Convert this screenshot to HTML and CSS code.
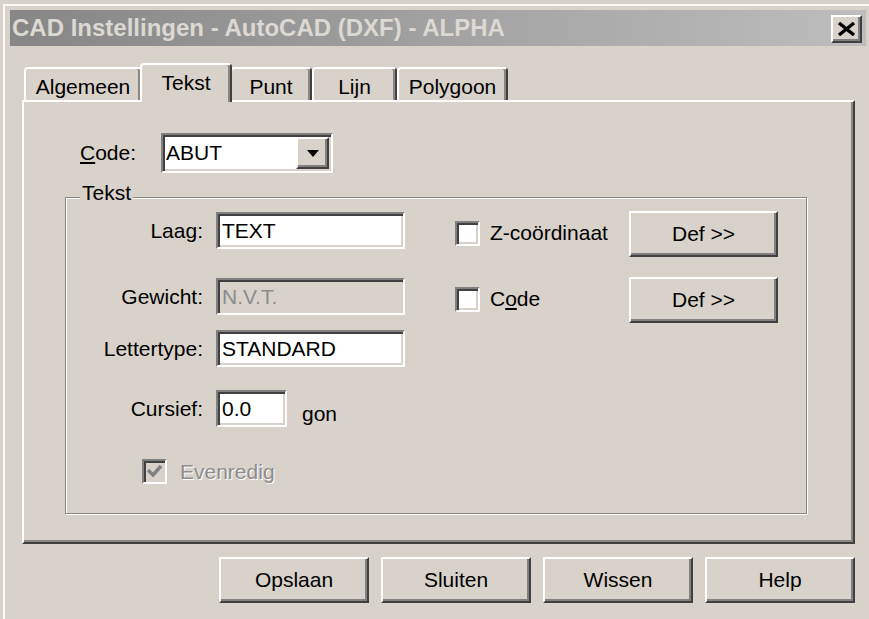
FILE: index.html
```html
<!DOCTYPE html>
<html lang="nl">
<head>
<meta charset="utf-8">
<title>CAD Instellingen - AutoCAD (DXF) - ALPHA</title>
<link rel="stylesheet" href="styles.css">
</head>
<body>
<div class="window">
  <div class="titlebar">
    <span class="title">CAD Instellingen - AutoCAD (DXF) - ALPHA</span>
    <button class="close" type="button" aria-label="Sluiten">
      <svg width="19" height="14" viewBox="0 0 19 14"><path d="M2 1 L17 13 M17 1 L2 13" stroke="#000" stroke-width="3.4" fill="none"/></svg>
    </button>
  </div>

  <div class="client">
    <div class="tabs">
      <div class="tab tab-algemeen">Algemeen</div>
      <div class="tab tab-tekst active">Tekst</div>
      <div class="tab tab-punt">Punt</div>
      <div class="tab tab-lijn">Lijn</div>
      <div class="tab tab-polygoon">Polygoon</div>
    </div>

    <div class="panel">
      <div class="code-row">
        <span class="code-label"><u>C</u>ode:</span>
        <div class="combo">
          <span class="combo-value">ABUT</span>
          <span class="combo-btn">
            <svg width="12" height="7" viewBox="0 0 12 7"><path d="M0 0 H12 L6 7 Z" fill="#000"/></svg>
          </span>
        </div>
      </div>

      <fieldset class="group">
        <legend>Tekst</legend>
        <div class="group-body">
          <div class="fields">
            <div class="row row-laag">
              <span class="lbl">Laag:</span>
              <div class="edit">TEXT</div>
            </div>
            <div class="row row-gewicht">
              <span class="lbl">Gewicht:</span>
              <div class="edit disabled">N.V.T.</div>
            </div>
            <div class="row row-font">
              <span class="lbl">Lettertype:</span>
              <div class="edit">STANDARD</div>
            </div>
            <div class="row row-cursief">
              <span class="lbl">Cursief:</span>
              <div class="edit edit-short">0.0</div>
              <span class="unit">gon</span>
            </div>
            <div class="row row-even">
              <span class="check checked disabled">
                <svg width="17" height="15" viewBox="0 0 17 15"><path d="M2 6 L7 11 L15 2" stroke="#808080" stroke-width="3.4" fill="none"/></svg>
              </span>
              <span class="check-text disabled-text">Evenredig</span>
            </div>
          </div>

          <div class="options">
            <div class="opt">
              <span class="check"></span>
              <span class="check-text">Z-coördinaat</span>
            </div>
            <button class="btn" type="button">Def &gt;&gt;</button>
            <div class="opt">
              <span class="check"></span>
              <span class="check-text">C<u>o</u>de</span>
            </div>
            <button class="btn" type="button">Def &gt;&gt;</button>
          </div>
        </div>
      </fieldset>
    </div>

    <div class="actions">
      <button class="btn" type="button">Opslaan</button>
      <button class="btn" type="button">Sluiten</button>
      <button class="btn" type="button">Wissen</button>
      <button class="btn" type="button">Help</button>
    </div>
  </div>
</div>
</body>
</html>
```
FILE: styles.css
```css
* { box-sizing: border-box; }

html, body {
  margin: 0;
  height: 100%;
}

body {
  background: #d8d2ca;
  font-family: "Liberation Sans", Arial, sans-serif;
  font-size: 21px;
  color: #000;
  overflow: hidden;
}

/* dialog frame */
.window {
  height: calc(100% - 4px);
  margin: 4px 0 0 3px;
  padding: 4px 0 0 5px;
  background: #d8d2ca;
  border-top: 2px solid #fbfaf8;
  border-left: 2px solid #fbfaf8;
}

.titlebar {
  height: 36px;
  margin-right: 3px;
  padding: 0 4px 0 2px;
  display: flex;
  align-items: center;
  justify-content: space-between;
  background: linear-gradient(to right, #868686, #bdbdbd);
}

.title {
  font-weight: bold;
  font-size: 24px;
  color: #dcd8d2;
  white-space: nowrap;
}

.close {
  width: 31px;
  height: 28px;
  margin-top: 2px;
  padding: 0;
  display: flex;
  align-items: center;
  justify-content: center;
  background: #d8d2ca;
  border: 2px solid;
  border-color: #fff #404040 #404040 #fff;
  box-shadow: inset -2px -2px #808080;
}

/* client area */
.client {
  padding: 0 14px 0 12px;
}

.tabs {
  height: 37px;
  margin: 17px 0 0 2px;
  display: flex;
  align-items: flex-end;
}

.tab {
  height: 33px;
  padding-top: 4px;
  display: flex;
  align-items: center;
  justify-content: center;
  background: #d8d2ca;
  border: 2px solid;
  border-bottom: 0;
  border-color: #fff #404040 transparent #fff;
  border-radius: 4px 4px 0 0;
  box-shadow: inset -2px 0 #8a8680;
  white-space: nowrap;
}

.tab-algemeen { width: 118px; }
.tab-tekst    { width: 92px; }
.tab-punt     { width: 82px; }
.tab-lijn     { width: 85px; }
.tab-polygoon { width: 111px; }

.tab.active {
  position: relative;
  z-index: 1;
  height: 39px;
  margin: 0 -2px -2px;
  padding-top: 0;
  padding-bottom: 2px;
}

.panel {
  height: 444px;
  padding: 0 0 0 41px;
  border: 2px solid;
  border-color: #fff #404040 #404040 #fff;
  box-shadow: inset -2px -2px #8a8680;
}

/* code selector */
.code-row {
  margin: 31px 0 0 15px;
  display: flex;
  align-items: center;
}

.code-label {
  width: 81px;
}

.combo {
  width: 172px;
  height: 40px;
  padding: 2px;
  display: flex;
  align-items: stretch;
  background: #fff;
  border: 2px solid;
  border-color: #808080 #fff #fff #808080;
  box-shadow: inset 2px 2px #404040, inset -2px -2px #d8d2ca;
}

.combo-value {
  flex: 1;
  padding-left: 1px;
  display: flex;
  align-items: center;
}

.combo-btn {
  width: 33px;
  display: flex;
  align-items: center;
  justify-content: center;
  background: #d8d2ca;
  border: 2px solid;
  border-color: #fff #404040 #404040 #fff;
  box-shadow: inset -2px -2px #808080;
}

/* group box */
.group {
  width: 742px;
  height: 329px;
  margin: 12px 0 0;
  padding: 0;
  border: 1px solid #8a8680;
  box-shadow: 1px 1px 0 #fff, inset 1px 1px 0 #fff;
  min-width: 0;
}

.group legend {
  margin-left: 14px;
  padding: 0 2px 9px;
  line-height: 16px;
  background: #d8d2ca;
}

.group-body {
  display: flex;
  align-items: flex-start;
}

.fields {
  display: flex;
  flex-direction: column;
}

.row {
  display: flex;
  align-items: center;
}

.row-laag    { margin-top: 2px; }
.row-gewicht { margin-top: 29px; }
.row-font    { margin-top: 15px; }
.row-cursief { margin-top: 23px; }
.row-even    { margin-top: 32px; padding-left: 76px; }

.lbl {
  width: 137px;
  margin-right: 13px;
  text-align: right;
  white-space: nowrap;
}

.edit {
  width: 189px;
  height: 37px;
  padding: 0 4px;
  display: flex;
  align-items: center;
  background: #fff;
  border: 2px solid;
  border-color: #808080 #fff #fff #808080;
  box-shadow: inset 2px 2px #404040, inset -2px -2px #d8d2ca;
  white-space: nowrap;
}

.edit.disabled {
  background: #d8d2ca;
  color: #8c8c8c;
  box-shadow: inset 2px 2px #404040;
}

.edit-short {
  width: 71px;
}

.unit {
  margin-left: 15px;
  padding-top: 10px;
}

/* check boxes */
.check {
  width: 25px;
  height: 25px;
  flex: none;
  display: flex;
  align-items: center;
  justify-content: center;
  background: #fff;
  border: 2px solid;
  border-color: #808080 #fff #fff #808080;
  box-shadow: inset 2px 2px #404040, inset -2px -2px #d8d2ca;
}

.check.disabled {
  background: #d8d2ca;
}

.check-text {
  margin-left: 10px;
  white-space: nowrap;
}

.disabled-text {
  margin-left: 13px;
  color: #8c8c8c;
  text-shadow: 1px 1px 0 #fff;
}

.options {
  margin: 1px 0 0 50px;
  display: grid;
  grid-template-columns: 174px 149px;
  grid-auto-rows: 46px;
  row-gap: 20px;
  align-items: center;
}

.opt {
  display: flex;
  align-items: center;
  padding-bottom: 2px;
}

/* push buttons */
.btn {
  width: 150px;
  height: 46px;
  padding: 0;
  font: inherit;
  color: #000;
  background: #d8d2ca;
  border: 2px solid;
  border-color: #fff #404040 #404040 #fff;
  box-shadow: inset -2px -2px #808080;
}

.options .btn {
  width: 149px;
}

.actions {
  margin-top: 13px;
  display: flex;
  justify-content: flex-end;
  gap: 12px;
}
```
